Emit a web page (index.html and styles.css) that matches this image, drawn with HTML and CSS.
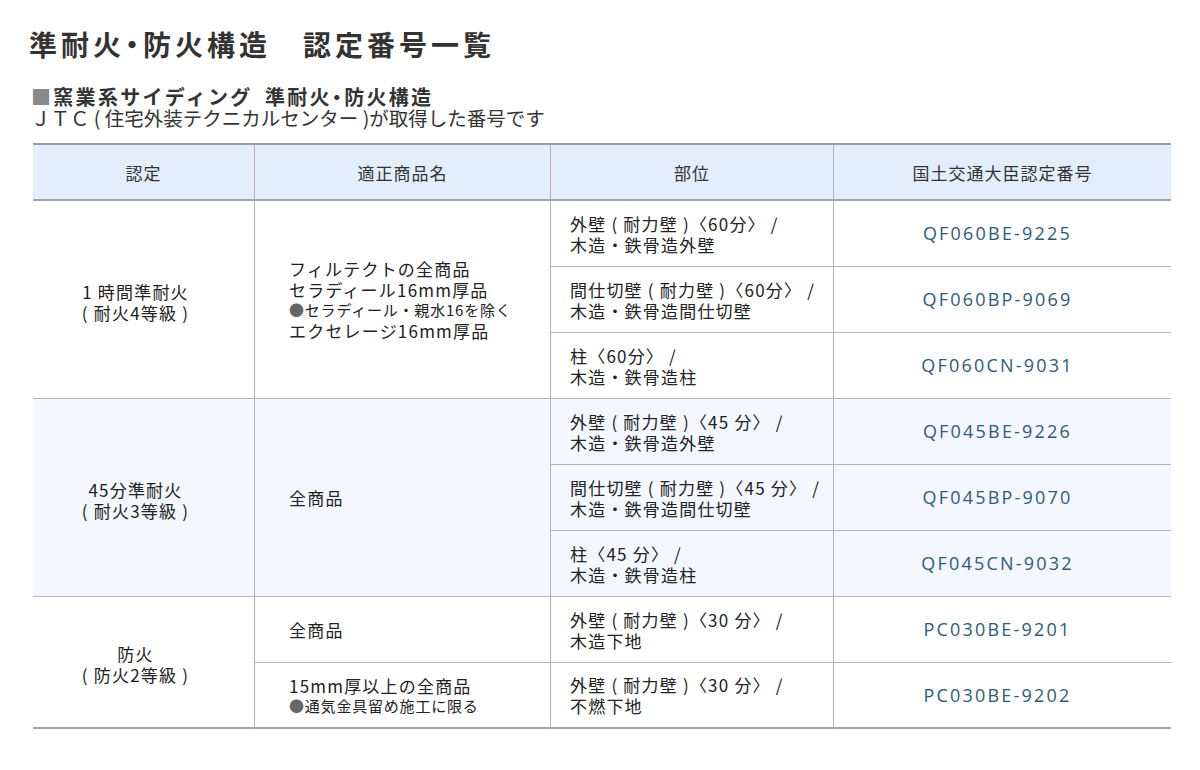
FILE: index.html
```html
<!DOCTYPE html>
<html lang="ja">
<head>
<meta charset="utf-8">
<title>準耐火・防火構造 認定番号一覧</title>
<link rel="stylesheet" href="styles.css">
</head>
<body>
<main class="page">
  <h1 class="title">準耐火<span class="dot">・</span>防火構造　認定番号一覧</h1>
  <p class="sub"><span class="sq">■</span>窯業系サイディング&ensp;準耐火<span class="dot">・</span>防火構造</p>
  <p class="note">ＪＴＣ ( 住宅外装テクニカルセンター )が取得した番号です</p>

  <div class="table">
    <div class="cell head">認定</div>
    <div class="cell head">適正商品名</div>
    <div class="cell head">部位</div>
    <div class="cell head last-col">国土交通大臣認定番号</div>

    <!-- group 1 -->
    <div class="cell grade span3"><span>1 時間準耐火</span><span>( 耐火4等級 )</span></div>
    <div class="cell product span3">
      <span>フィルテクトの全商品</span>
      <span>セラディール16mm厚品</span>
      <span class="small"><span class="bullet">●</span>セラディール・親水16を除く</span>
      <span>エクセレージ16mm厚品</span>
    </div>
    <div class="cell part"><span>外壁 ( 耐力壁 )〈60分〉 /</span><span>木造・鉄骨造外壁</span></div>
    <div class="cell code last-col">QF060BE-9225</div>
    <div class="cell part"><span>間仕切壁 ( 耐力壁 )〈60分〉 /</span><span>木造・鉄骨造間仕切壁</span></div>
    <div class="cell code last-col">QF060BP-9069</div>
    <div class="cell part"><span>柱〈60分〉 /</span><span>木造・鉄骨造柱</span></div>
    <div class="cell code last-col">QF060CN-9031</div>

    <!-- group 2 -->
    <div class="cell grade span3 alt"><span>45分準耐火</span><span>( 耐火3等級 )</span></div>
    <div class="cell product span3 alt"><span>全商品</span></div>
    <div class="cell part alt"><span>外壁 ( 耐力壁 )〈45 分〉 /</span><span>木造・鉄骨造外壁</span></div>
    <div class="cell code last-col alt">QF045BE-9226</div>
    <div class="cell part alt"><span>間仕切壁 ( 耐力壁 )〈45 分〉 /</span><span>木造・鉄骨造間仕切壁</span></div>
    <div class="cell code last-col alt">QF045BP-9070</div>
    <div class="cell part alt"><span>柱〈45 分〉 /</span><span>木造・鉄骨造柱</span></div>
    <div class="cell code last-col alt">QF045CN-9032</div>

    <!-- group 3 -->
    <div class="cell grade span2 bottom"><span>防火</span><span>( 防火2等級 )</span></div>
    <div class="cell product"><span>全商品</span></div>
    <div class="cell part"><span>外壁 ( 耐力壁 )〈30 分〉 /</span><span>木造下地</span></div>
    <div class="cell code last-col">PC030BE-9201</div>
    <div class="cell product bottom"><span>15mm厚以上の全商品</span><span class="small"><span class="bullet">●</span>通気金具留め施工に限る</span></div>
    <div class="cell part bottom"><span>外壁 ( 耐力壁 )〈30 分〉 /</span><span>不燃下地</span></div>
    <div class="cell code last-col bottom">PC030BE-9202</div>
  </div>
</main>
</body>
</html>
```

FILE: styles.css
```css
* { box-sizing: border-box; }

html, body {
  margin: 0;
  padding: 0;
  background: #ffffff;
}

body {
  font-family: "Noto Sans CJK JP", "Noto Sans", sans-serif;
  color: #222222;
}

.page {
  padding: 30px 0 0 29px;
}

.title {
  margin: 0;
  font-size: 28px;
  line-height: 28px;
  font-weight: 700;
  letter-spacing: 4px;
  color: #333333;
}

.dot {
  font-feature-settings: "halt" 1;
}

.sub {
  margin: 28px 0 0 2px;
  font-size: 20px;
  line-height: 21px;
  font-weight: 700;
  letter-spacing: 2.3px;
  color: #333333;
}

.sq {
  color: #8a8a8a;
}

.note {
  margin: 0 0 0 2px;
  font-size: 19.5px;
  line-height: 21px;
  color: #333333;
}

.table {
  margin: 15px 0 0 4px;
  width: 1138px;
  display: grid;
  grid-template-columns: 222px 296px 283px 337px;
  grid-template-rows: 56px repeat(8, 66px);
  border-top: 2px solid #9c9c9c;
}

.cell {
  display: flex;
  flex-direction: column;
  justify-content: center;
  border-right: 1px solid #b4b4b4;
  border-bottom: 1px solid #b4b4b4;
  font-size: 17px;
  line-height: 21px;
  letter-spacing: 1.2px;
  color: #222222;
}

.cell.last-col {
  border-right: none;
}

.cell.head {
  align-items: center;
  background: #e2eefc;
  border-bottom: 2px solid #a3a3a3;
  color: #333333;
  letter-spacing: 1px;
}

.cell.alt {
  background: #f4f8fe;
}

.cell.bottom {
  border-bottom: 2px solid #a3a3a3;
}

.span3 { grid-row: span 3; }
.span2 { grid-row: span 2; }

.grade {
  align-items: center;
  text-align: center;
  padding: 4px 16px 0 0;
}

.product {
  padding-left: 34px;
}

.small {
  font-size: 15px;
  line-height: 20px;
  letter-spacing: 0.8px;
}

.bullet {
  color: #666666;
}

.part {
  padding-left: 19px;
}

.code {
  align-items: center;
  font-family: "Open Sans", "Noto Sans", sans-serif;
  font-size: 18px;
  letter-spacing: 2.2px;
  color: #2d5b7b;
  padding-right: 10px;
}
```
